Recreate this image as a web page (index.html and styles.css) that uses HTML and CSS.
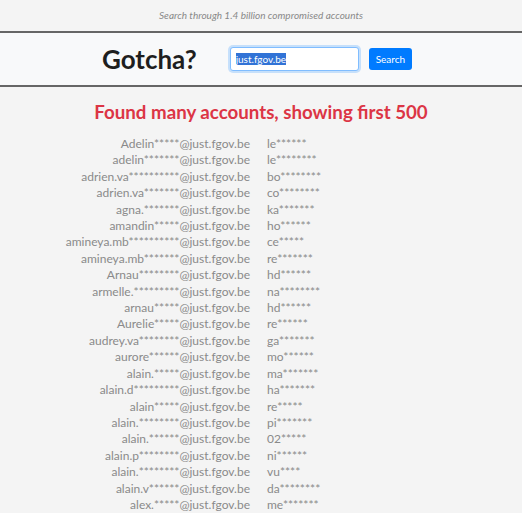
FILE: index.html
```html
<!DOCTYPE html>
<html lang="en">
<head>
    <meta charset="UTF-8">
    <meta name="viewport" content="width=device-width, initial-scale=1.0">
    <title>Gotcha?</title>
    <link rel="stylesheet" href="styles.css">
</head>
<body>
    <div id="tagline">Search through 1.4 billion compromised accounts</div>
    <div id="header">
        <div id="logo">Gotcha?</div>
        <form id="search" onsubmit="return false">
            <input id="query" type="text" value="just.fgov.be">
            <button id="go">Search</button>
        </form>
    </div>
    <div id="results">
        <h2 id="found">Found many accounts, showing first 500</h2>
        <div id="list">
            <!-- rows filled in below -->
        </div>
    </div>

    <script>
        const rows = [
            ['Adelin*****', 'le******'],
            ['adelin*******', 'le********'],
            ['adrien.va**********', 'bo********'],
            ['adrien.va*******', 'co********'],
            ['agna.*******', 'ka*******'],
            ['amandin*****', 'ho******'],
            ['amineya.mb**********', 'ce*****'],
            ['amineya.mb*******', 're*******'],
            ['Arnau********', 'hd******'],
            ['armelle.*********', 'na********'],
            ['arnau*****', 'hd******'],
            ['Aurelie*****', 're******'],
            ['audrey.va********', 'ga*******'],
            ['aurore******', 'mo******'],
            ['alain.*****', 'ma*******'],
            ['alain.d*********', 'ha*******'],
            ['alain*****', 're*****'],
            ['alain.********', 'pi*******'],
            ['alain.******', '02*****'],
            ['alain.p********', 'ni******'],
            ['alain.********', 'vu****'],
            ['alain.v******', 'da********'],
            ['alex.*****', 'me*******']
        ];

        const list = document.getElementById('list');
        rows.forEach(r => {
            const mail = document.createElement('div');
            mail.className = 'mail';
            mail.textContent = r[0] + '@just.fgov.be';
            const pass = document.createElement('div');
            pass.className = 'pass';
            pass.textContent = r[1];
            list.appendChild(mail);
            list.appendChild(pass);
        });

        const q = document.getElementById('query');
        q.focus();
        q.select();
    </script>
</body>
</html>
```

FILE: styles.css
```css
body {
    font-family: 'Lato', 'Open Sans', sans-serif;
    background-color: #f4f4f4;
    margin: 0;
    padding: 0;
    color: #212529;
}

#tagline {
    text-align: center;
    font-style: italic;
    font-size: 10px;
    color: #888;
    padding: 9px 0 10px;
}

#header {
    display: flex;
    align-items: center;
    justify-content: center;
    gap: 33px;
    height: 52px;
    padding-right: 8px;
    background-color: #f8f9fa;
    border-top: 2px solid #666;
    border-bottom: 2px solid #666;
}

#logo {
    font-size: 26px;
    font-weight: 700;
    color: #1e1e1e;
}

#search {
    display: flex;
    align-items: center;
    gap: 10px;
}

#query {
    width: 117px;
    height: 18px;
    padding: 2px 5px;
    font-family: inherit;
    font-size: 10px;
    color: #495057;
    border: 1px solid #80bdff;
    border-radius: 3px;
    outline: none;
    box-shadow: 0 0 0 2px rgba(0, 123, 255, 0.2);
}

#query::selection {
    background-color: #3173d6;
    color: #fff;
}

#go {
    height: 22px;
    padding: 0 7px;
    font-family: inherit;
    font-size: 10px;
    color: #fff;
    background-color: #007bff;
    border: none;
    border-radius: 3px;
}

#results {
    padding-top: 14px;
}

#found {
    margin: 0 0 13px;
    text-align: center;
    font-size: 18.7px;
    font-weight: 700;
    color: #dc3545;
}

#list {
    display: grid;
    grid-template-columns: 1fr 1fr;
    column-gap: 17px;
    padding-right: 5px;
    font-size: 12px;
    line-height: 16.4px;
    color: #8a8a8a;
}

.mail {
    text-align: right;
}

.pass {
    text-align: left;
}
```
